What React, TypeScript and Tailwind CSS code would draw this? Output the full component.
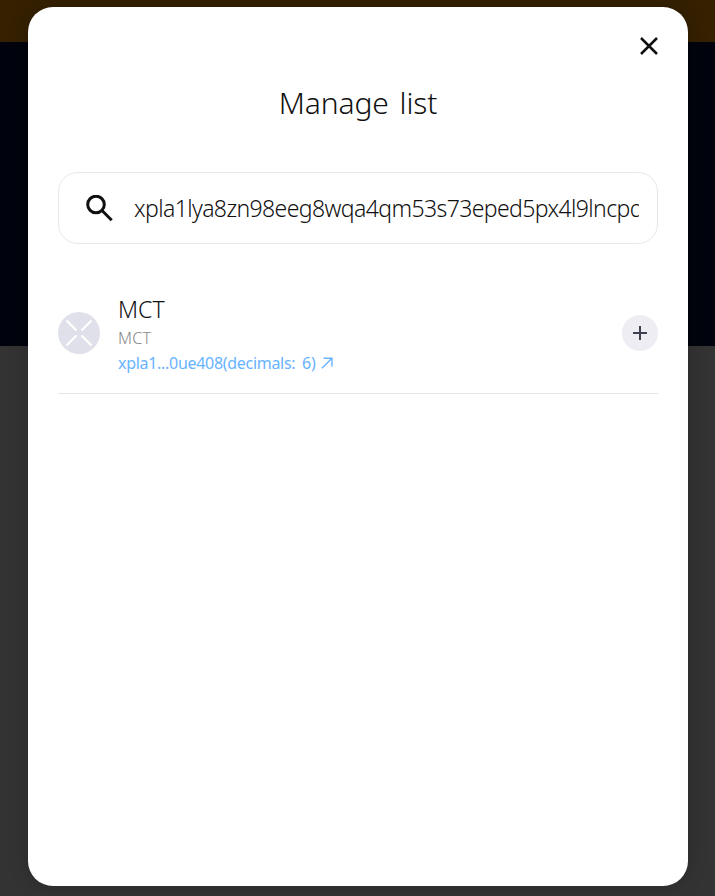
import { ReactNode } from "react";

function Backdrop() {
  return (
    <div className="flex h-full flex-col">
      <div className="h-[42px] bg-[#352000]" />
      <div className="h-[304px] bg-[#00030d]" />
      <div className="flex-1 bg-[#333333]" />
    </div>
  );
}

function Modal({ children }: { children: ReactNode }) {
  return (
    <div className="absolute left-[28px] top-[7px] flex h-[879px] w-[660px] flex-col rounded-[25px] bg-white px-[30px] shadow-[0_0_20px_rgba(0,0,0,0.2)]">
      {children}
    </div>
  );
}

function TokenRow() {
  return (
    <div className="mt-[48px] flex h-[102px] border-b border-[#e5e5e5]">
      <svg className="mt-[20px] h-[42px] w-[42px] shrink-0" viewBox="0 0 42 42">
        <circle cx="21" cy="21" r="21" fill="#e0e0eb" />
        <path d="M8.5 8.5 18.5 18.5M33.5 8.5 23.5 18.5M8.5 33.5 18.5 23.5M33.5 33.5 23.5 23.5" stroke="#fff" strokeWidth="2.2" />
      </svg>
      <div className="ml-[18px] flex flex-1 flex-col whitespace-nowrap">
        <div className="mt-[2px] h-[30px] text-[23px] font-[350] leading-[30px] text-[#101010]">MCT</div>
        <div className="mt-[2px] h-[24px] text-[16px] font-[350] leading-[24px] tracking-[0.3px] text-[#888888]">MCT</div>
        <div className="mt-px flex h-[24px] items-center text-[16px] leading-[24px] text-[#67b3ff]">
          <span className="w-[203px] tracking-[-0.3px] [word-spacing:3px]">xpla1...0ue408(decimals: 6)</span>
          <svg className="h-[12px] w-[12px]" viewBox="0 0 12 12" fill="none" stroke="currentColor" strokeWidth="1.4">
            <path d="M2.5 1.2H11V9.5M11 1.2 .9 11.3" />
          </svg>
        </div>
      </div>
      <button className="mt-[23px] flex h-[36px] w-[36px] items-center justify-center rounded-full bg-[#ededf3]" aria-label="Add">
        <svg className="h-[14px] w-[14px]" viewBox="0 0 14 14" stroke="#3d4050" strokeWidth="2">
          <path d="M7 0V14M0 7H14" />
        </svg>
      </button>
    </div>
  );
}

export default function App() {
  return (
    <div className="relative h-[896px] w-[715px] overflow-hidden font-['Noto_Sans','Open_Sans',sans-serif]">
      <Backdrop />
      <Modal>
        <button className="ml-auto mt-[30px] flex h-[18px] w-[18px] shrink-0" aria-label="Close">
          <svg className="h-[18px] w-[18px]" viewBox="0 0 18 18" stroke="#101010" strokeWidth="2.5">
            <path d="M1 1 17 17M17 1 1 17" />
          </svg>
        </button>
        <h1 className="mt-[26px] h-[44px] text-center text-[30px] font-light leading-[44px] tracking-[-0.1px] text-[#101010] [word-spacing:3px]">Manage list</h1>
        <div className="mt-[47px] flex h-[72px] shrink-0 items-center rounded-[20px] border border-[#e8e8e8] pl-[27px] pr-[18px]">
          <svg className="h-[27px] w-[27px] shrink-0" viewBox="0 0 27 27" fill="none" stroke="#101010" strokeWidth="3">
            <circle cx="10" cy="9.5" r="8.3" />
            <path d="M16 15.5 25.7 25.2" />
          </svg>
          <input
            className="ml-[21px] h-[34px] min-w-0 flex-1 bg-transparent text-[23px] font-light leading-[34px] tracking-[-0.6px] text-[#101010] outline-none"
            defaultValue="xpla1lya8zn98eeg8wqa4qm53s73eped5px4l9lncpdx"
          />
        </div>
        <TokenRow />
      </Modal>
    </div>
  );
}
